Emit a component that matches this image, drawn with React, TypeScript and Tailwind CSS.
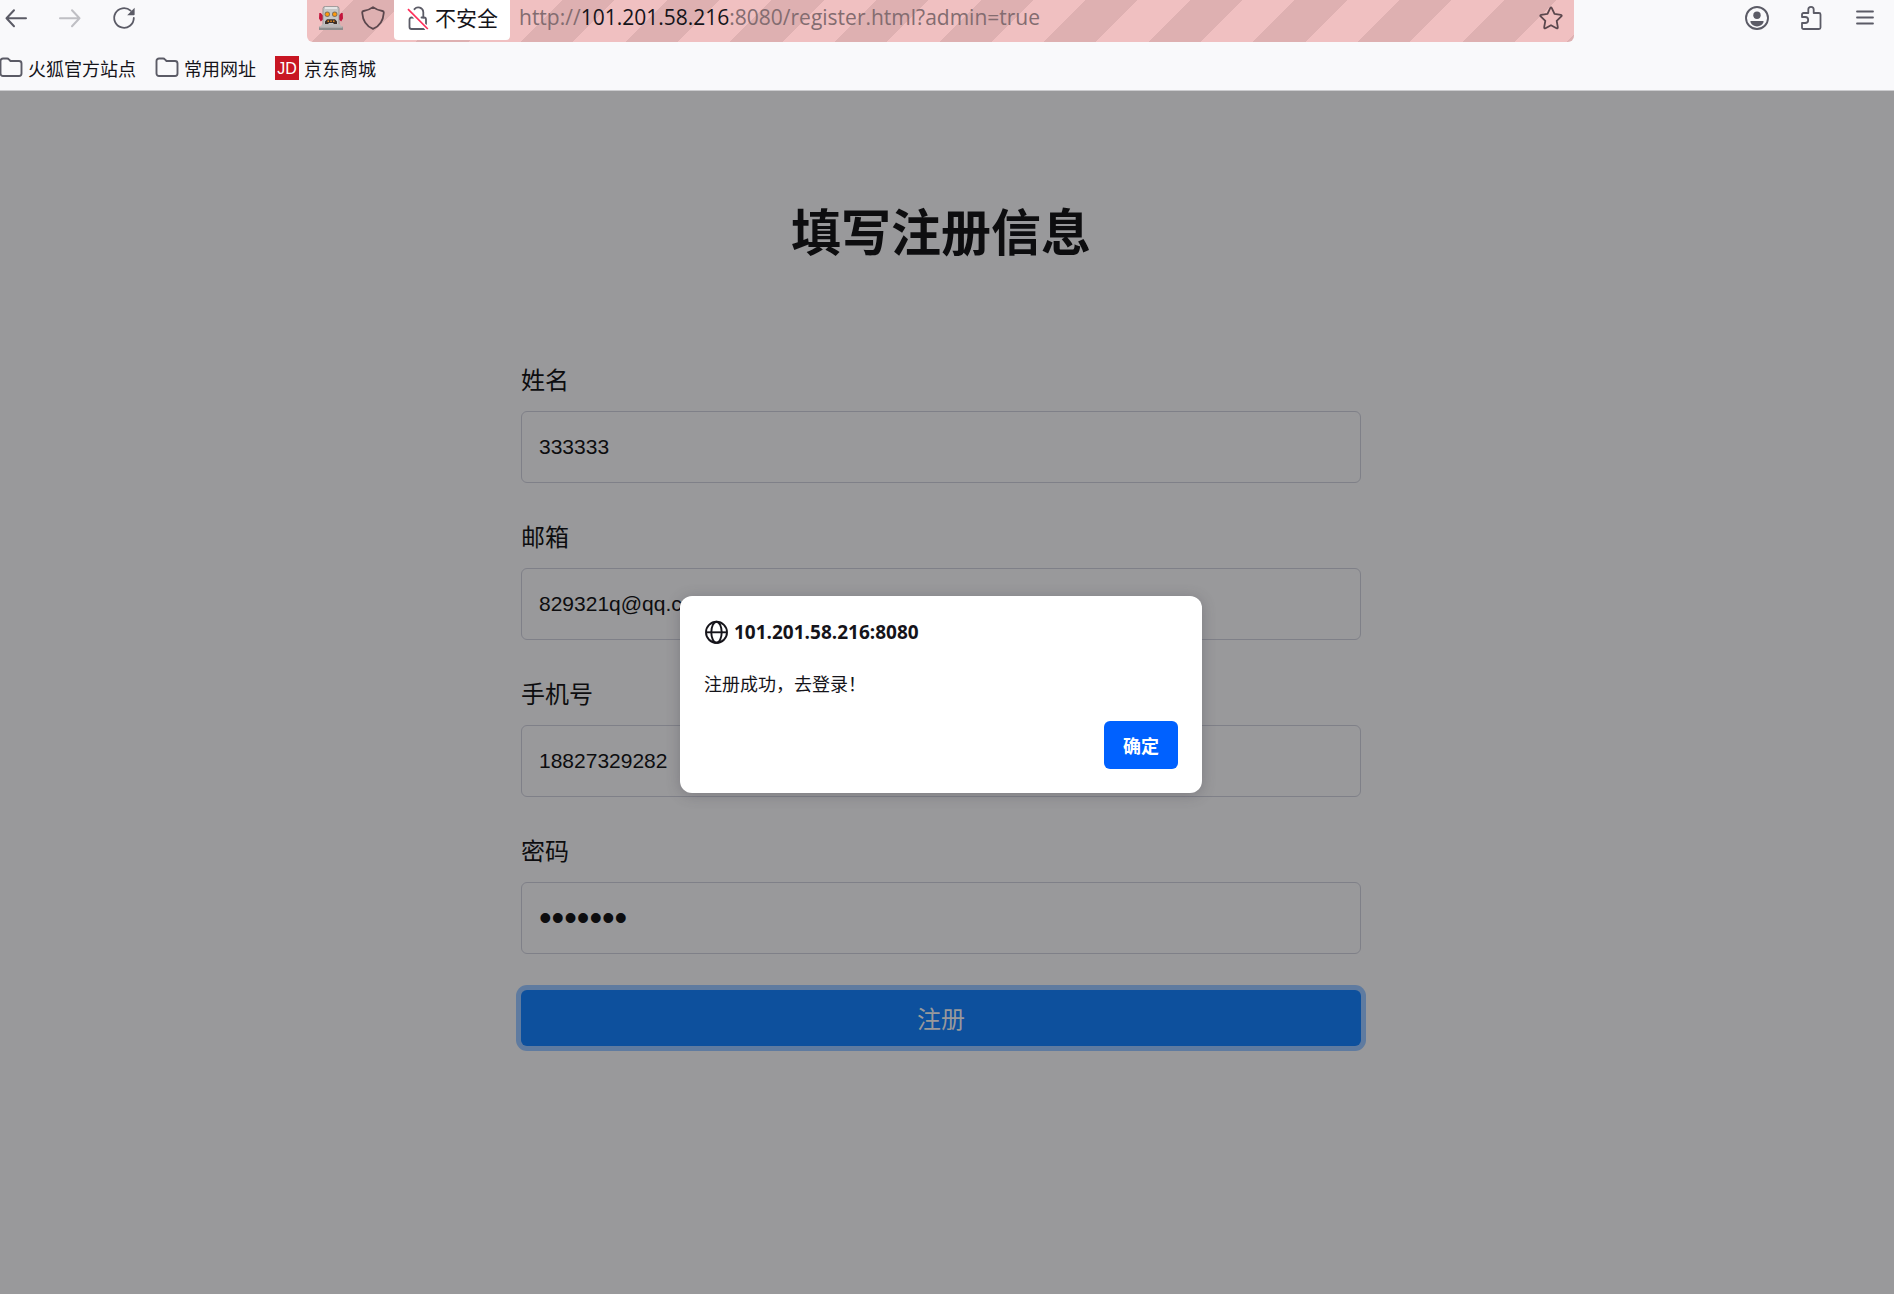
import { useState } from "react";
import type { ReactNode } from "react";

type IconProps = { className?: string };

const BackIcon = ({ className = "" }: IconProps) => (
  <svg viewBox="0 0 24 24" className={`size-6 ${className}`} fill="none" stroke="currentColor" strokeWidth="2" strokeLinecap="round" strokeLinejoin="round">
    <path d="M22 12.300H2.500M10 4.300l-7.500 8 7.500 8" />
  </svg>
);

const ForwardIcon = ({ className = "" }: IconProps) => (
  <svg viewBox="0 0 24 24" className={`size-6 ${className}`} fill="none" stroke="currentColor" strokeWidth="2" strokeLinecap="round" strokeLinejoin="round">
    <path d="M2 12.300h19.500M14 4.300l7.500 8-7.500 8" />
  </svg>
);

const ReloadIcon = () => (
  <svg viewBox="0 0 24 24" className="size-6" fill="none">
    <path d="M21.8 12A9.8 9.8 0 1 1 18.6 4.7" stroke="currentColor" strokeWidth="1.8" strokeLinecap="round" />
    <path d="M22.6 1.8v6.6a.8.8 0 0 1-.8.8h-6.6z" fill="currentColor" />
  </svg>
);

const RobotIcon = () => (
  <svg viewBox="0 0 24 24" className="size-6">
    <path d="M.300 7h1.500L4 9.500v4L1.800 15.500 0 12.500zM23.700 7h-1.500L20 9.500v4l2.200 2 1.800-3z" fill="#c4143c" />
    <path d="M4 2.500Q4 .400 6.500.400h11q2.500 0 2.500 2.100V19H4z" fill="#c6c6c6" stroke="#8c8c8c" strokeWidth=".8" />
    <path d="M6 2h12" stroke="#efefef" strokeWidth="1.500" />
    <path d="M1.500 20.500L3.500 18h17l2 2.500z" fill="#b9b9b9" />
    <rect x="0" y="20.500" width="24" height="3.500" rx=".6" fill="#8e8e8e" />
    <path d="M.500 21h23" stroke="#c9c9c9" />
    <circle cx="8.300" cy="8.300" r="2.700" fill="#8a7355" />
    <circle cx="15.700" cy="8.300" r="2.700" fill="#8a7355" />
    <circle cx="8.300" cy="8.300" r="1.700" fill="#ff9a0a" />
    <circle cx="15.700" cy="8.300" r="1.700" fill="#ff9a0a" />
    <path d="M6 18v-2.500L8 13.300h8l2 2.200V18h-3l-1-1h-4l-1 1z" fill="#3b2f28" />
    <path d="M8.500 15.300H10M11.300 15.300h1.500M14 15.300h1.500" stroke="#e58a1f" strokeWidth="1.400" />
  </svg>
);

const ShieldIcon = () => (
  <svg viewBox="0 0 24 24" className="size-6 text-[#5b474d]" fill="none" stroke="currentColor" strokeWidth="1.8" strokeLinejoin="round">
    <path d="M12 1.100c-2.600 2-6 3.300-9.400 3.900-.9.200-1.500.8-1.400 1.700C1.700 13.800 5 20 12 22.900 19 20 22.300 13.800 22.800 6.700c.1-.9-.5-1.500-1.400-1.700-3.400-.6-6.800-1.900-9.400-3.900z" />
  </svg>
);

const InsecureIcon = () => (
  <svg viewBox="0 0 24 24" className="size-6" fill="none">
    <g stroke="#5b5b66" strokeWidth="1.800" strokeLinecap="round">
      <path d="M8.500 3.200A5 5 0 0 1 17.300 6v5.500" />
      <path d="M6.800 11.500H5.500a2 2 0 0 0-2 2V21a2 2 0 0 0 2 2h13" />
      <path d="M15.500 11.500H18a2 2 0 0 1 2 2v4.500M7.300 7.500v4" />
    </g>
    <path d="M2 3.500l20 20" stroke="#fff" strokeWidth="4" />
    <path d="M2 3.200l19.800 19.800" stroke="#ff2f5a" strokeWidth="1.700" />
  </svg>
);

const StarIcon = () => (
  <svg viewBox="0 0 24 24" className="size-6" fill="none" stroke="currentColor" strokeWidth="1.800" strokeLinejoin="round">
    <path d="M11.200 2.100q.8-1.400 1.600 0l2.700 5.800 6.300.9q1.600.4.500 1.600l-4.600 4.500 1.100 6.300q.1 1.600-1.300 1L12 19.200l-5.500 3q-1.400.6-1.300-1l1.100-6.300-4.600-4.500q-1.100-1.200.5-1.600l6.300-.9z" />
  </svg>
);

const AccountIcon = () => (
  <svg viewBox="0 0 24 24" className="size-6">
    <circle cx="12" cy="12" r="11" fill="none" stroke="currentColor" strokeWidth="1.900" />
    <circle cx="12" cy="9.300" r="3.700" fill="currentColor" />
    <path d="M6.200 15h11.600q1.200 0 .8 1.100a7.200 7.200 0 0 1-13.200 0Q5 15 6.200 15z" fill="currentColor" />
  </svg>
);

const ExtensionIcon = () => (
  <svg viewBox="0 0 24 24" className="size-6" fill="none" stroke="currentColor" strokeWidth="1.800" strokeLinejoin="round">
    <path d="M3 11V8.500A1.500 1.500 0 0 1 4.500 7H9.300V3.600a2.700 2.700 0 0 1 5.400 0V7h5.300a1.500 1.500 0 0 1 1.500 1.500v13A1.500 1.500 0 0 1 20 23H4.500A1.500 1.500 0 0 1 3 21.500V17h3.200a3 3 0 0 0 0-6z" />
  </svg>
);

const MenuIcon = () => (
  <svg viewBox="0 0 24 24" className="size-6" stroke="currentColor" strokeWidth="1.800" strokeLinecap="round">
    <path d="M4 5.500h16M4 11.500h16M4 17.500h16" />
  </svg>
);

const FolderIcon = () => (
  <svg viewBox="0 0 24 24" className="size-6 text-[#5b5b66]" fill="none" stroke="currentColor" strokeWidth="1.900" strokeLinejoin="round">
    <path d="M1.500 5a2.500 2.500 0 0 1 2.500-2.500h4.200q1 0 1.700.8L11.500 5H20a2.500 2.500 0 0 1 2.500 2.500v10a2.500 2.500 0 0 1-2.500 2.500H4a2.500 2.500 0 0 1-2.500-2.500z" />
  </svg>
);

const GlobeIcon = () => (
  <svg viewBox="0 0 24 24" className="size-6 text-[#15141a]" fill="none" stroke="currentColor" strokeWidth="1.900">
    <circle cx="12.500" cy="12.300" r="10.500" />
    <ellipse cx="12.500" cy="12.300" rx="5.200" ry="10.500" />
    <path d="M2 12.300h21" />
  </svg>
);

const ToolbarButton = ({ label, disabled, children }: { label: string; disabled?: boolean; children: ReactNode }) => (
  <button type="button" aria-label={label} disabled={disabled} className="text-[#5b5b66] disabled:text-[#bfbfc4]">
    {children}
  </button>
);

const fields = [
  { id: "name", label: "姓名", type: "text", value: "333333" },
  { id: "email", label: "邮箱", type: "text", value: "829321q@qq.com" },
  { id: "phone", label: "手机号", type: "text", value: "18827329282" },
  { id: "password", label: "密码", type: "password", value: "3333333" },
];

function BrowserChrome() {
  return (
    <header className="border-b border-[#cccccf] bg-[#f9f9fb] text-[#15141a]">
      <div className="flex items-start">
        <nav className="flex h-9 w-[307px] items-center gap-[30px] pl-1">
          <ToolbarButton label="后退">
            <BackIcon />
          </ToolbarButton>
          <ToolbarButton label="前进" disabled>
            <ForwardIcon />
          </ToolbarButton>
          <ToolbarButton label="刷新">
            <ReloadIcon />
          </ToolbarButton>
        </nav>

        <div className="flex h-[42px] flex-1 items-start rounded-b-md bg-[repeating-linear-gradient(-45deg,#deb0b1_0px,#deb0b1_5px,#f0c0c1_5px,#f0c0c1_42px,#deb0b1_42px,#deb0b1_74px)] pr-[11px] pl-3">
          <div className="flex h-9 items-center gap-[18px]">
            <RobotIcon />
            <ShieldIcon />
          </div>
          <div className="ml-[9px] flex h-10 items-start rounded-b bg-white px-3">
            <div className="flex h-9 items-center gap-[5px]">
              <InsecureIcon />
              <span className="text-[21px]">不安全</span>
            </div>
          </div>
          <p className="flex h-9 flex-1 items-center pl-[9px] font-['Open_Sans'] text-[21px] text-[#836c70]">
            http://<span className="text-[#15141a]">101.201.58.216</span>:8080/register.html?admin=true
          </p>
          <button type="button" aria-label="添加书签" className="flex h-9 items-center text-[#5b474d]">
            <StarIcon />
          </button>
        </div>

        <div className="flex h-9 w-80 items-center justify-end gap-[30px] pr-[17px]">
          <ToolbarButton label="账户">
            <AccountIcon />
          </ToolbarButton>
          <ToolbarButton label="扩展">
            <ExtensionIcon />
          </ToolbarButton>
          <ToolbarButton label="菜单">
            <MenuIcon />
          </ToolbarButton>
        </div>
      </div>

      <nav className="flex h-12 items-center gap-[19px] pt-1 text-lg">
        <a href="#firefox" className="-ml-px flex items-center gap-[5px]">
          <FolderIcon />
          火狐官方站点
        </a>
        <a href="#common" className="flex items-center gap-[5px]">
          <FolderIcon />
          常用网址
        </a>
        <a href="#jd" className="flex items-center gap-[5px]">
          <span className="flex size-6 items-center justify-center bg-[#c81623] pt-0.5 font-['Liberation_Sans'] text-base text-white">
            JD
          </span>
          京东商城
        </a>
      </nav>
    </header>
  );
}

export default function App() {
  const [values, setValues] = useState(() => Object.fromEntries(fields.map((f) => [f.id, f.value])));
  const [alertOpen, setAlertOpen] = useState(true);

  return (
    <div className="flex min-h-screen flex-col font-['Noto_Sans_CJK_SC',sans-serif]">
      <BrowserChrome />

      <main className="relative flex-1 bg-[#99999b] pr-3 text-[#0d0d0f]">
        <h1 className="pt-[102px] text-center text-[50px] leading-[72px] font-bold">填写注册信息</h1>

        <form className="mx-auto mt-[97px] max-w-[840px]" onSubmit={(e) => e.preventDefault()}>
          {fields.map((field) => (
            <div key={field.id} className="mb-9">
              <label htmlFor={field.id} className="mb-[15px] block text-2xl leading-[34px]">
                {field.label}
              </label>
              <input
                id={field.id}
                type={field.type}
                value={values[field.id]}
                onChange={(e) => setValues({ ...values, [field.id]: e.target.value })}
                className={`block h-[72px] w-full rounded-md border border-[#7f8088] px-[17px] font-['Liberation_Sans'] ${
                  field.type === "password" ? "text-4xl" : "text-[21px]"
                }`}
              />
            </div>
          ))}
          <button
            type="submit"
            className="block h-14 w-full rounded-md bg-[#0d509d] text-2xl text-[#99999b] ring-5 ring-[#5f7ba0]"
          >
            注册
          </button>
        </form>

        {alertOpen ? (
          <div className="absolute inset-x-0 top-[505px] flex justify-center pr-3">
            <div
              role="alertdialog"
              aria-labelledby="alert-title"
              className="flex w-[522px] flex-col rounded-xl bg-white p-6 text-[#15141a] shadow-[0_2px_14px_rgba(58,57,68,0.3)]"
            >
              <h2 id="alert-title" className="flex items-center gap-1.5 font-['Open_Sans'] text-[19px] leading-6 font-bold">
                <GlobeIcon />
                101.201.58.216:8080
              </h2>
              <p className="mt-[25px] text-lg leading-7">注册成功，去登录！</p>
              <button
                type="button"
                onClick={() => setAlertOpen(false)}
                className="mt-6 h-12 w-[74px] self-end rounded-md bg-[#0061ff] text-lg font-bold text-white"
              >
                确定
              </button>
            </div>
          </div>
        ) : null}
      </main>
    </div>
  );
}
